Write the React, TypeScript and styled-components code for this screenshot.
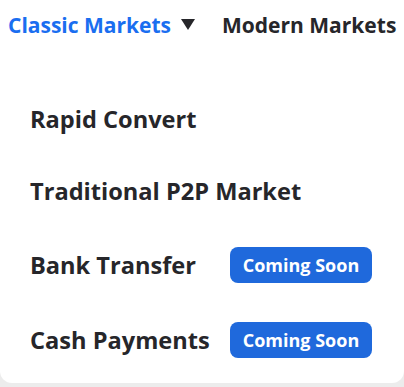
import React from "react";
import styled, { createGlobalStyle } from "styled-components";

const Global = createGlobalStyle`
  html, body { margin: 0; padding: 0; background: #ececec; }
  body { font-family: "Open Sans", "Noto Sans", sans-serif; }
`;

const Card = styled.div`
  width: 404px;
  height: 383px;
  box-sizing: border-box;
  background: #ffffff;
  border-radius: 0 0 12px 12px;
  display: flex;
  flex-direction: column;
`;

const Tabs = styled.div`
  display: flex;
  align-items: center;
  height: 50px;
  padding-left: 8px;
`;

const Tab = styled.div<{ $active?: boolean }>`
  display: flex;
  align-items: center;
  font-size: 21px;
  font-weight: 700;
  color: ${(p) => (p.$active ? "#1a6ef0" : "#26262a")};
  margin-right: 27px;
  white-space: nowrap;
`;

const Caret = styled.svg`
  margin-left: 10px;
  width: 14px;
  height: 12px;
`;

const Menu = styled.div`
  display: flex;
  flex-direction: column;
  padding: 33px 0 0 30px;
`;

const Item = styled.div<{ $tall?: boolean }>`
  display: flex;
  align-items: center;
  height: ${(p) => (p.$tall ? 75 : 72)}px;
  font-size: 23.6px;
  font-weight: 700;
  color: #26262a;
`;

const Label = styled.span`
  min-width: 200px;
  white-space: nowrap;
`;

const Badge = styled.span`
  display: inline-flex;
  align-items: center;
  justify-content: center;
  width: 142px;
  height: 36px;
  border-radius: 8px;
  background: #1f69dc;
  color: #fff;
  font-size: 18px;
  font-weight: 700;
  white-space: nowrap;
`;

const items: { label: string; soon?: boolean }[] = [
  { label: "Rapid Convert" },
  { label: "Traditional P2P Market" },
  { label: "Bank Transfer", soon: true },
  { label: "Cash Payments", soon: true },
];

export default function App() {
  return (
    <>
      <Global />
      <Card>
        <Tabs>
          <Tab $active>
            Classic Markets
            <Caret viewBox="0 0 14 12">
              <path d="M0 0 H14 L7 11 Z" fill="#26262a" />
            </Caret>
          </Tab>
          <Tab>Modern Markets</Tab>
        </Tabs>
        <Menu>
          {items.map((it) => (
            <Item key={it.label} $tall={it.soon}>
              <Label>{it.label}</Label>
              {it.soon && <Badge>Coming Soon</Badge>}
            </Item>
          ))}
        </Menu>
      </Card>
    </>
  );
}
